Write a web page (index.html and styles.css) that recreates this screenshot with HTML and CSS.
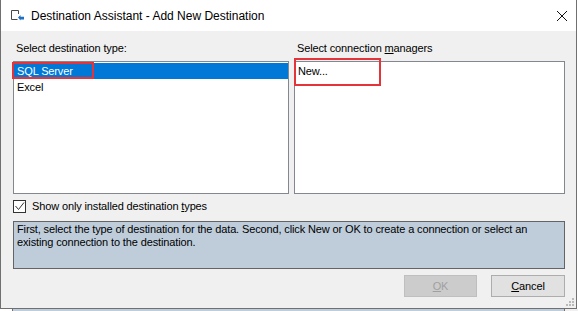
FILE: index.html
```html
<!DOCTYPE html>
<html>
<head>
    <title>Destination Assistant - Add New Destination</title>
    <link rel="stylesheet" href="styles.css">
</head>
<body>
    <div class="window">
        <div class="titlebar">
            <svg class="app-icon" width="16" height="16" viewBox="0 0 16 16">
                <path d="M7.5 11.5 H1.5 V2.5 H8.5 V6" fill="none" stroke="#4a4a4a" stroke-width="1"/>
                <path d="M8 9.5 L10.5 7 V8.7 H14 V11.5 H10.5 V12.5 Z" fill="#1f6fc5"/>
            </svg>
            <span class="title">Destination Assistant - Add New Destination</span>
            <svg class="close" width="12" height="12" viewBox="0 0 12 12">
                <path d="M1 1 L11 11 M11 1 L1 11" stroke="#111" stroke-width="1"/>
            </svg>
        </div>

        <div class="content">
            <div class="pickers">
                <div class="picker picker-type">
                    <div class="caption">Select destination type:</div>
                    <ul class="listbox">
                        <li class="selected">SQL Server</li>
                        <li>Excel</li>
                    </ul>
                    <!-- red annotation boxes from the screenshot -->
                    <span class="callout callout-type"></span>
                </div>
                <div class="picker picker-conn">
                    <div class="caption">Select connection <u>m</u>anagers</div>
                    <ul class="listbox">
                        <li>New...</li>
                    </ul>
                    <span class="callout callout-conn"></span>
                </div>
            </div>

            <label class="check-row">
                <span class="checkbox">
                    <svg width="11" height="11" viewBox="0 0 11 11">
                        <path d="M1.5 5 L4.5 8.5 L10 1.5" fill="none" stroke="#333" stroke-width="1"/>
                    </svg>
                </span>
                <span class="check-text">Show only installed destination <u>t</u>ypes</span>
            </label>

            <div class="info">First, select the type of destination for the data. Second, click New or OK to create a connection or select an existing connection to the destination.</div>

            <div class="buttons">
                <button type="button" class="btn" disabled><u>O</u>K</button>
                <button type="button" class="btn"><u>C</u>ancel</button>
            </div>
        </div>

        <svg class="grip" width="9" height="9" viewBox="0 0 9 9">
            <rect x="6" y="0" width="2" height="2" fill="#b9b9b9"/>
            <rect x="3" y="3" width="2" height="2" fill="#b9b9b9"/>
            <rect x="6" y="3" width="2" height="2" fill="#b9b9b9"/>
            <rect x="0" y="6" width="2" height="2" fill="#b9b9b9"/>
            <rect x="3" y="6" width="2" height="2" fill="#b9b9b9"/>
            <rect x="6" y="6" width="2" height="2" fill="#b9b9b9"/>
        </svg>
    </div>

    <!-- edge of the dialog lying behind this one -->
    <div class="behind">
        <span class="behind-left"></span>
        <span class="behind-box"></span>
        <span class="behind-right"></span>
    </div>
</body>
</html>
```

FILE: styles.css
```css
/* Global styles */
* {
    margin: 0;
    padding: 0;
    box-sizing: border-box;
}

body {
    font-family: "Liberation Sans", Arial, sans-serif;
    font-size: 11px;
    line-height: 13px;
    letter-spacing: -0.13px;
    color: #000;
    background-color: #fff;
    width: 578px;
}

u {
    text-decoration: underline;
    text-underline-offset: 1px;
}

.window {
    position: relative;
    width: 577px;
    height: 309px;
    background-color: #f0f0f0;
    border: 1px solid #707070;
    border-top: none;
    display: flex;
    flex-direction: column;
}

/* Title bar */
.titlebar {
    height: 31px;
    background-color: #fff;
    display: flex;
    align-items: center;
    padding-left: 9px;
}

.app-icon {
    margin-top: 1px;
}

.title {
    margin-left: 5px;
    font-size: 12px;
    line-height: 16px;
    letter-spacing: 0;
    padding-top: 1px;
    flex: 1;
}

.close {
    margin-right: 8px;
    margin-top: 1px;
}

/* Dialog content */
.content {
    flex: 1;
    padding: 11px 11px 0 12px;
    display: flex;
    flex-direction: column;
}

.pickers {
    display: flex;
    gap: 5px;
}

.picker {
    position: relative;
    display: flex;
    flex-direction: column;
}

.picker-type {
    width: 276px;
}

.picker-conn {
    width: 271px;
}

.caption {
    height: 13px;
    margin-bottom: 6px;
    padding-left: 3px;
}

.listbox {
    list-style: none;
    height: 133px;
    background-color: #fff;
    border: 1px solid #828790;
    padding-top: 1px;
}

.listbox li {
    height: 16px;
    line-height: 16px;
    padding-left: 3px;
}

.listbox li.selected {
    background-color: #0078d7;
    color: #fff;
}

.callout {
    position: absolute;
    border: 2px solid #e5333a;
}

.callout-type {
    left: -1px;
    top: 20px;
    width: 82px;
    height: 17px;
}

.callout-conn {
    left: 0;
    top: 16px;
    width: 87px;
    height: 28px;
}

/* Checkbox */
.check-row {
    margin-top: 6px;
    height: 13px;
    display: flex;
    align-items: center;
    gap: 6px;
}

.checkbox {
    width: 13px;
    height: 13px;
    border: 1px solid #333;
    background-color: #fff;
    display: flex;
    align-items: center;
    justify-content: center;
}

/* Info box */
.info {
    margin-top: 8px;
    height: 48px;
    background-color: #bfcddb;
    border: 1px solid #646464;
    padding: 1px 3px 0 3px;
}

/* Buttons */
.buttons {
    margin-top: 6px;
    display: flex;
    justify-content: flex-end;
    gap: 14px;
}

.btn {
    font-family: "Liberation Sans", Arial, sans-serif;
    font-size: 11px;
    letter-spacing: -0.13px;
    width: 74px;
    height: 22px;
    background-color: #e1e1e1;
    border: 1px solid #adadad;
    color: #000;
}

.btn:disabled {
    width: 73px;
    background-color: #cccccc;
    border-color: #bfbfbf;
    color: #a0a0a0;
}

.grip {
    position: absolute;
    right: 1px;
    bottom: 1px;
}

/* Dialog behind */
.behind {
    display: flex;
    height: 2px;
}

.behind-left {
    width: 13px;
    background-color: #fff;
    border-right: 1px solid #707070;
}

.behind-box {
    width: 551px;
    background-color: #bfcddb;
}

.behind-right {
    flex: 1;
    background-color: #f0f0f0;
    border-left: 1px solid #707070;
}
```
